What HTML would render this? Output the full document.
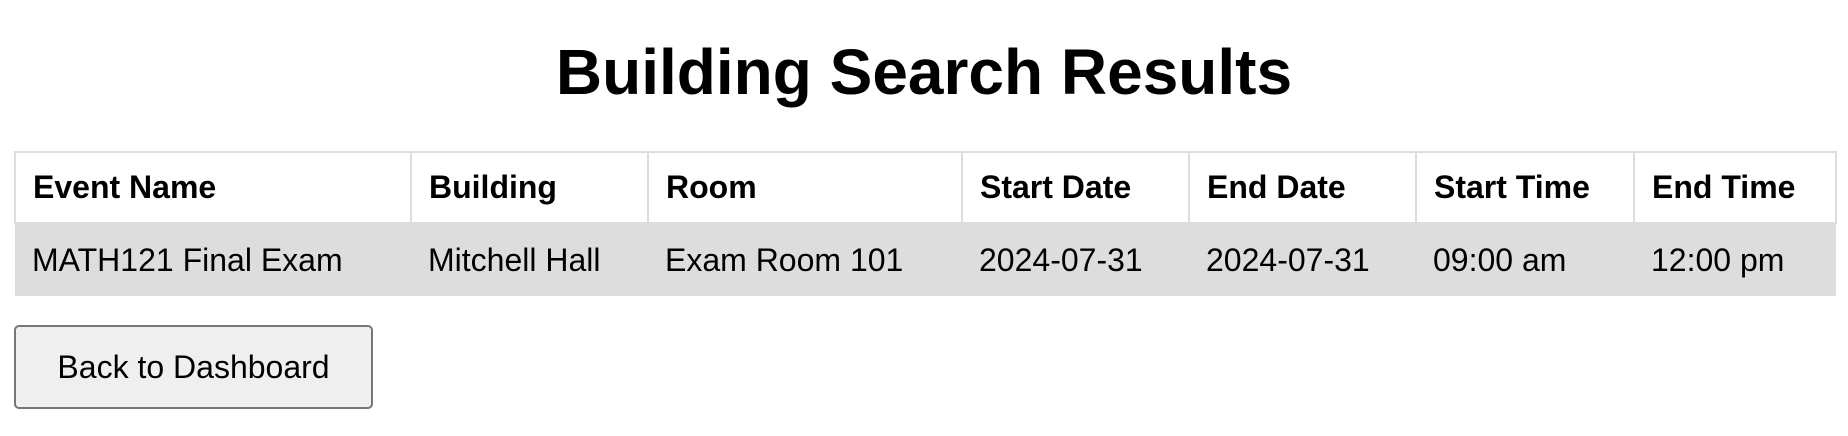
<!DOCTYPE html>
<html><head><style>
body{margin:0;background:#fff;font-family:"Liberation Sans",Arial,sans-serif;width:1848px;height:436px;overflow:hidden}
h1{margin:0;position:absolute;top:30px;left:0;width:1848px;text-align:center;font-size:64px;font-weight:bold;line-height:84px}
table{position:absolute;left:14px;top:151px;width:1823px;border-collapse:collapse;font-size:32px}
th,td{text-align:left;padding:0 17px;white-space:nowrap}
th{height:69px;border:2px solid #ddd;font-weight:bold}
td{height:72px;background:#ddd}
button{position:absolute;left:14px;top:325px;width:359px;height:84px;font-family:inherit;font-size:32px;background:#efefef;border:2px solid #767676;border-radius:5px;color:#000}
</style></head><body>
<h1>Building Search Results</h1>
<table>
<colgroup><col style="width:396px"><col style="width:237px"><col style="width:314px"><col style="width:227px"><col style="width:227px"><col style="width:218px"><col></colgroup>
<tr><th>Event Name</th><th>Building</th><th>Room</th><th>Start Date</th><th>End Date</th><th>Start Time</th><th>End Time</th></tr>
<tr><td>MATH121 Final Exam</td><td>Mitchell Hall</td><td>Exam Room 101</td><td>2024-07-31</td><td>2024-07-31</td><td>09:00 am</td><td>12:00 pm</td></tr>
</table>
<button>Back to Dashboard</button>
</body></html>
